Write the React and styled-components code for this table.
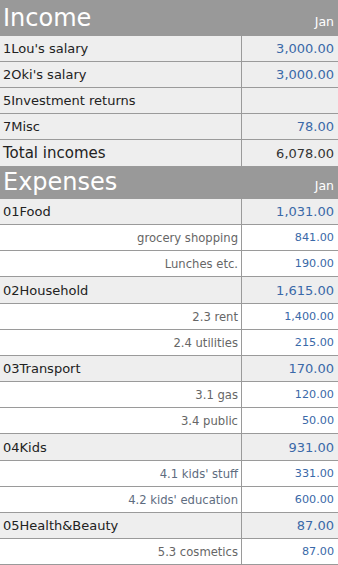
import React from "react";
import styled, { createGlobalStyle } from "styled-components";

const Global = createGlobalStyle`
  html, body { margin: 0; padding: 0; background: #fff; }
  body { font-family: "DejaVu Sans", Verdana, sans-serif; }
`;

const Page = styled.div`
  width: 338px;
  display: flex;
  flex-direction: column;
`;

const Header = styled.div`
  display: flex;
  align-items: baseline;
  justify-content: space-between;
  background: #999999;
  color: #ffffff;
  height: ${(p) => p.$h}px;
  box-sizing: border-box;
  padding: ${(p) => p.$top}px 4px 0 3px;
`;

const Title = styled.span`
  font-size: 24px;
  line-height: 26px;
`;

const Month = styled.span`
  font-size: 12.5px;
`;

const Row = styled.div`
  display: grid;
  grid-template-columns: 241px 97px;
  height: ${(p) => p.$h || 26}px;
  box-sizing: border-box;
  border-bottom: 1px solid #9a9a9a;
  background: ${(p) => (p.$sub ? "#ffffff" : "#eeeeee")};
`;

const Label = styled.div`
  display: flex;
  align-items: center;
  justify-content: ${(p) => (p.$sub ? "flex-end" : "flex-start")};
  padding: ${(p) => (p.$sub ? "0 3px 0 0" : "0 0 0 3px")};
  font-size: ${(p) => (p.$total ? 15 : p.$sub ? 11.6 : 13)}px;
  color: ${(p) => (p.$sub ? p.$tint || "#666666" : "#222222")};
  white-space: nowrap;
`;

const Amount = styled.div`
  display: flex;
  align-items: center;
  justify-content: flex-end;
  padding-right: 4px;
  border-left: 1px solid #9a9a9a;
  font-size: ${(p) => (p.$sub ? 11.2 : 13)}px;
  color: ${(p) => (p.$total ? "#333333" : "#3a69a8")};
`;

const income = [
  ["1Lou's salary", "3,000.00"],
  ["2Oki's salary", "3,000.00"],
  ["5Investment returns", ""],
  ["7Misc", "78.00"],
];

const expenses = [
  ["01Food", "1,031.00"],
  ["grocery shopping", "841.00", true],
  ["Lunches etc.", "190.00", true],
  ["02Household", "1,615.00"],
  ["2.3 rent", "1,400.00", true],
  ["2.4 utilities", "215.00", true],
  ["03Transport", "170.00"],
  ["3.1 gas", "120.00", true],
  ["3.4 public", "50.00", true],
  ["04Kids", "931.00"],
  ["4.1 kids' stuff", "331.00", true, "#5e6c80"],
  ["4.2 kids' education", "600.00", true, "#5e6c80"],
  ["05Health&Beauty", "87.00"],
  ["5.3 cosmetics", "87.00", true],
];

export default function App() {
  return (
    <Page>
      <Global />
      <Header $h={36} $top={5}>
        <Title>Income</Title>
        <Month>Jan</Month>
      </Header>
      {income.map(([l, a]) => (
        <Row key={l}>
          <Label>{l}</Label>
          <Amount>{a}</Amount>
        </Row>
      ))}
      <Row $h={27}>
        <Label $total>Total incomes</Label>
        <Amount $total>6,078.00</Amount>
      </Row>
      <Header $h={32} $top={2}>
        <Title>Expenses</Title>
        <Month>Jan</Month>
      </Header>
      {expenses.map(([l, a, sub, tint], i) => (
        <Row key={l} $sub={sub} $h={i === 3 || i === 9 ? 27 : 26}>
          <Label $sub={sub} $tint={tint}>{l}</Label>
          <Amount $sub={sub}>{a}</Amount>
        </Row>
      ))}
    </Page>
  );
}
